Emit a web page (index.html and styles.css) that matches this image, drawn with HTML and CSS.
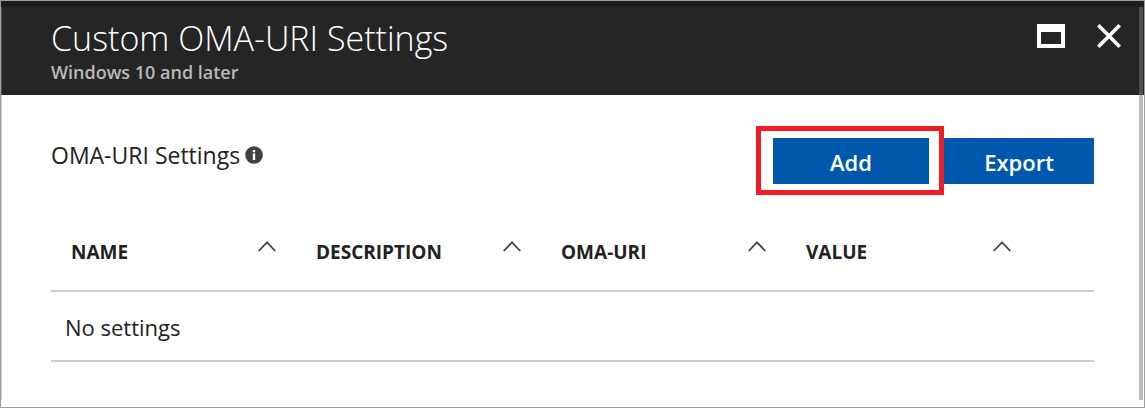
FILE: index.html
```html
<!DOCTYPE html>
<html lang="en">
<head>
<meta charset="utf-8">
<title>Custom OMA-URI Settings</title>
<link rel="stylesheet" href="styles.css">
</head>
<body>
<div class="frame">
  <main class="blade">
    <header class="blade-header">
      <div class="titles">
        <h1 class="title">Custom OMA-URI Settings</h1>
        <p class="subtitle">Windows 10 and later</p>
      </div>
      <div class="window-actions">
        <button class="icon-button" type="button" aria-label="Maximize">
          <svg width="28" height="24" viewBox="0 0 28 24"><path fill="#fff" fill-rule="evenodd" d="M0 0H28V24H0ZM4 8V20H24V8Z"/></svg>
        </button>
        <button class="icon-button" type="button" aria-label="Close">
          <svg width="24" height="24" viewBox="0 0 24 24"><path stroke="#fff" stroke-width="3.6" d="M1.3 1.3L22.7 22.7M22.7 1.3L1.3 22.7"/></svg>
        </button>
      </div>
    </header>
    <section class="content">
      <div class="toolbar">
        <h2 class="section-label">OMA-URI Settings
          <svg class="info" width="18" height="18" viewBox="0 0 18 18" role="img" aria-label="Information"><circle cx="9" cy="9" r="8.8" fill="#404040"/><path fill="#fff" d="M7.8 4h2.4v2.2H7.8zM7.8 7.4h2.4V14H7.8z"/></svg>
        </h2>
        <div class="commands">
          <div class="highlight"><button class="command" type="button">Add</button></div>
          <button class="command command-export" type="button">Export</button>
        </div>
      </div>
      <table class="grid">
        <thead>
          <tr>
            <th scope="col"><button class="sort" type="button">NAME <svg class="chevron" width="18" height="11" viewBox="0 0 18 11"><path d="M.7 10L9 1.3L17.3 10"/></svg></button></th>
            <th scope="col"><button class="sort" type="button">DESCRIPTION <svg class="chevron" width="18" height="11" viewBox="0 0 18 11"><path d="M.7 10L9 1.3L17.3 10"/></svg></button></th>
            <th scope="col"><button class="sort" type="button">OMA-URI <svg class="chevron" width="18" height="11" viewBox="0 0 18 11"><path d="M.7 10L9 1.3L17.3 10"/></svg></button></th>
            <th scope="col"><button class="sort" type="button">VALUE <svg class="chevron" width="18" height="11" viewBox="0 0 18 11"><path d="M.7 10L9 1.3L17.3 10"/></svg></button></th>
            <td class="spacer"></td>
          </tr>
        </thead>
        <tbody>
          <tr><td class="empty" colspan="5">No settings</td></tr>
        </tbody>
      </table>
    </section>
  </main>
</div>
</body>
</html>
```
FILE: styles.css
```css
* {
  box-sizing: border-box;
}

body {
  margin: 0;
  background: #fff;
  color: #222;
  font-family: "Segoe UI", "Open Sans", "Noto Sans", sans-serif;
}

button {
  font-family: inherit;
  border: 0;
  cursor: pointer;
}

.frame {
  display: flex;
  flex-direction: column;
  min-height: 100vh;
  padding: 0 1px 7px 0;
  border: 1px solid #9d9d9d;
}

.frame::before {
  content: "";
  height: 6px;
  margin-right: -1px;
  background: #1c1e1d;
}

.blade {
  position: relative;
  flex: 1;
}

/* Edge lines of the blade, drawn over its header and content */
.blade::after {
  content: "";
  position: absolute;
  inset: 0;
  border-left: 1px solid rgba(140, 140, 140, 0.4);
  border-right: 4px solid rgba(120, 120, 120, 0.5);
  pointer-events: none;
}

.blade-header {
  display: flex;
  justify-content: space-between;
  height: 88px;
  margin-right: -1px;
  padding: 9px 23px 0 50px;
  background: #252525;
}

.title {
  margin: 0;
  color: #fff;
  font-size: 34px;
  font-weight: 300;
  line-height: 45px;
}

.subtitle {
  margin: 0;
  color: #b9b9b9;
  font-size: 18px;
  font-weight: 600;
  line-height: 22px;
}

.window-actions {
  display: flex;
  align-items: flex-start;
  gap: 32px;
  padding-top: 8px;
}

.icon-button {
  padding: 0;
  background: none;
}

.icon-button svg,
.chevron {
  display: block;
  fill: none;
}

.content {
  padding: 43px 49px 0 50px;
}

.toolbar {
  display: flex;
  justify-content: space-between;
}

.section-label {
  display: flex;
  align-items: center;
  gap: 5px;
  height: 34px;
  margin: 0;
  font-size: 23px;
  font-weight: 400;
}

.commands {
  display: flex;
  gap: 15px;
}

.command {
  display: block;
  width: 156px;
  height: 46px;
  padding: 2px 0 0;
  background: #0058ad;
  color: #fff;
  font-size: 22px;
  font-weight: 600;
}

.command-export {
  width: 150px;
}

.highlight {
  position: relative;
}

.highlight::after {
  content: "";
  position: absolute;
  z-index: 1;
  inset: -12px -15px -11px -17px;
  border: 5px solid #ee1c25;
  pointer-events: none;
}

.grid {
  width: 100%;
  margin-top: 28px;
  border-collapse: separate;
  border-spacing: 0;
  table-layout: fixed;
}

.grid th,
.grid td {
  height: 80px;
  padding: 2px 20px 0;
  border-bottom: 2px solid #ccc;
}

.grid .spacer {
  width: 63px;
}

.sort {
  display: flex;
  justify-content: space-between;
  width: 100%;
  padding: 0;
  background: none;
  color: #222;
  font-size: 19px;
  font-weight: 700;
  line-height: 26px;
}

.chevron {
  margin-top: 2px;
  stroke: #444;
  stroke-width: 1.8;
}

.grid .empty {
  height: 70px;
  padding: 2px 14px 0;
  font-size: 22px;
}
```
